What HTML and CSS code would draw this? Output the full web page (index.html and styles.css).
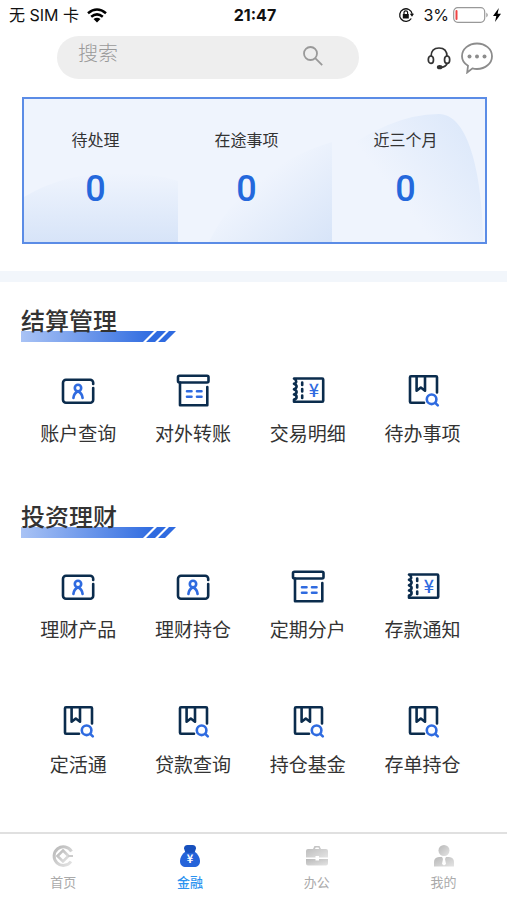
FILE: index.html
```html
<!DOCTYPE html>
<html lang="zh-CN">
<head>
  <meta charset="UTF-8" />
  <meta name="viewport" content="width=device-width, initial-scale=1" />
  <title>金融</title>
  <link rel="stylesheet" href="styles.css">
</head>
<body>

<!-- 图标 -->
<svg class="sprite" aria-hidden="true">
  <symbol id="icon-account" viewBox="0 0 36 36">
    <path class="dark" d="M33.200 11V9.800a3 3 0 0 0-3-3H6a3 3 0 0 0-3 3v17a3 3 0 0 0 3 3h24.200a3 3 0 0 0 3-3V15"/>
    <circle class="blue" cx="18" cy="15" r="3.200"/>
    <path class="blue" d="M13.400 25c.4-3.600 1.800-5.600 4.600-6.800 2.800 1.200 4.200 3.200 4.600 6.800"/>
  </symbol>
  <symbol id="icon-archive" viewBox="0 0 36 36">
    <rect class="dark" x="3" y="2.700" width="30.500" height="6.800" rx="1.500"/>
    <path class="dark" d="M5 9.500v22.800h27.300V14"/>
    <path class="blue" d="M12 18.200h4.500M22 18.200h4.500M12 23.800h4.500M22 23.800h4.500"/>
  </symbol>
  <symbol id="icon-ticket" viewBox="0 0 36 36">
    <path class="dark" d="M4 5.500h28.200q1 0 1 1v21.200q0 1-1 1H4v-2.200q2.600-.6 2.600-2.600T4 21.400q2.600-.8 2.600-2.400T4 16.200q2.600-.8 2.600-2.600T4 10.800q2.200-.6 2.200-2.400Q6.200 6.500 4 5.500z"/>
    <path class="dark" d="M12.200 9.500v2.500M12.200 16v2.500M12.200 22.500V25"/>
  </symbol>
  <symbol id="icon-book" viewBox="0 0 36 36">
    <path class="dark" d="M32 19.500V4.300q0-1-1-1H6q-1 0-1 1v24.400q0 1 1 1h13"/>
    <path class="dark" d="M11.600 3.500v14.200l4.200-3.200 4.200 3.200V3.500"/>
    <circle class="blue" cx="26.600" cy="26.300" r="4.800"/>
    <path class="blue" d="M30.200 29.800l2.600 2.600"/>
  </symbol>
  <symbol id="title-bar" viewBox="0 0 155 11">
    <path fill="url(#barFill)" d="M0 0h133l-11 11H0z"/>
    <path fill="#2f6be0" d="M136 0h9l-11 11h-9zM148 0h7l-11 11h-7z"/>
  </symbol>
  <defs>
    <linearGradient id="barFill">
      <stop offset="0" stop-color="#a9c3f5"/>
      <stop offset="1" stop-color="#2f6be0"/>
    </linearGradient>
    <linearGradient id="grayFill" x2="1" y2="1">
      <stop offset="0" stop-color="#b8b8b8"/>
      <stop offset="1" stop-color="#e4e4e4"/>
    </linearGradient>
  </defs>
</svg>

<!-- 状态栏 -->
<div class="status-bar">
  <div class="status-left">
    <span>无 SIM 卡</span>
    <svg width="20" height="15" viewBox="0 0 20 15" fill="none" stroke="#000" stroke-width="2.600">
      <path d="M1 5.200Q10-2.200 19 5.200M4.200 8.700q5.800-4.600 11.600 0"/>
      <path fill="#000" stroke="none" d="M6.500 11q3.500-2.700 7 0L10 14.500z"/>
    </svg>
  </div>
  <div class="status-time">21:47</div>
  <div class="status-right">
    <svg class="lock" width="16" height="16" viewBox="0 0 16 16" fill="none" stroke="#111">
      <path stroke-width="1.300" d="M13.300 11.500A6.300 6.300 0 1 1 14.200 7"/>
      <path fill="#111" stroke="none" d="M11.800 6.800h4.200l-2 3zM4.800 7h6v4.500h-6z"/>
      <path stroke-width="1.200" d="M6 7V5.600a1.800 1.800 0 0 1 3.600 0V7"/>
    </svg>
    <span>3%</span>
    <svg width="36" height="16" viewBox="0 0 36 16">
      <rect x=".7" y=".7" width="31" height="14.600" rx="4" fill="none" stroke="#999" stroke-width="1.200"/>
      <rect x="2.500" y="3" width="2" height="10" rx="1" fill="#ef4444"/>
      <path d="M33.300 5.500q3 2.500 0 5z" fill="#999"/>
    </svg>
    <svg width="8" height="14" viewBox="0 0 8 14"><path d="M5.800 0L0 8h3.300L2 14l6-8.300H4.600z"/></svg>
  </div>
</div>

<!-- 搜索 -->
<header class="header">
  <form class="search">
    <input type="text" name="keyword" placeholder="搜索" aria-label="搜索">
    <button type="submit" aria-label="搜索">
      <svg width="20" height="20" viewBox="0 0 20 20" fill="none" stroke="#999" stroke-width="1.800">
        <circle cx="7.500" cy="7.500" r="6.500"/>
        <path d="M12.200 12.200l7 7"/>
      </svg>
    </button>
  </form>
  <div class="header-actions">
    <button type="button" aria-label="客服">
      <svg width="24" height="24" viewBox="0 0 24 24" fill="none" stroke="#333" stroke-width="1.700">
        <path d="M4 10.500C4 5 7 2 12 2s8 3 8 8.500M20.300 17c-.8 2.500-3 4-6 4.300"/>
        <ellipse cx="3.900" cy="13.700" rx="2.600" ry="3.700"/>
        <ellipse cx="20.100" cy="13.700" rx="2.600" ry="3.700"/>
        <ellipse cx="12.700" cy="21.200" rx="2" ry="1.300" fill="#333"/>
      </svg>
    </button>
    <button type="button" aria-label="消息">
      <svg width="32" height="32" viewBox="0 0 32 32" fill="none" stroke="#8c8c8c" stroke-width="1.800">
        <path d="M7 23.800C3.300 21.500 1 18 1 14.200 1 7 7.700 1.500 16 1.500s15 5.500 15 12.700S24.300 27 16 27c-1.700 0-3.200-.2-4.600-.6L6.200 30.500z"/>
        <g fill="#8c8c8c" stroke="none"><circle cx="8.500" cy="14.500" r="2"/><circle cx="16" cy="14.500" r="2"/><circle cx="23.500" cy="14.500" r="2"/></g>
      </svg>
    </button>
  </div>
</header>

<main>
  <!-- 待办统计 -->
  <section class="summary">
    <svg class="summary-bg" viewBox="0 0 461 143" preserveAspectRatio="none" aria-hidden="true">
      <defs>
        <linearGradient id="wave1" x2="0" y2="1">
          <stop offset="0" stop-color="#eff4fd"/>
          <stop offset="1" stop-color="#d7e4f8"/>
        </linearGradient>
        <linearGradient id="wave2" x1=".4" y1=".4" x2="1" y2="1">
          <stop offset="0" stop-color="#eff4fd"/>
          <stop offset="1" stop-color="#d7e4f8"/>
        </linearGradient>
        <linearGradient id="wave3" x1="1" y1=".2" x2=".4" y2=".6">
          <stop offset="0" stop-color="#dce8fa"/>
          <stop offset="1" stop-color="#eff4fd"/>
        </linearGradient>
      </defs>
      <path fill="url(#wave1)" d="M0 98Q40 74 90 74q40 0 64 8v61H0z"/>
      <path fill="url(#wave2)" d="M185 143Q220 70 308 43v100z"/>
      <path fill="url(#wave3)" d="M308 60Q365 15 415 15c28 0 43 55 44 128H308z"/>
    </svg>
    <div class="summary-item">
      <span class="summary-label">待处理</span>
      <span class="summary-value">0</span>
    </div>
    <div class="summary-item">
      <span class="summary-label">在途事项</span>
      <span class="summary-value">0</span>
    </div>
    <div class="summary-item">
      <span class="summary-label">近三个月</span>
      <span class="summary-value">0</span>
    </div>
  </section>

  <div class="divider"></div>

  <section class="group">
    <h2 class="group-title"><svg><use href="#title-bar"/></svg><span>结算管理</span></h2>
    <div class="menu">
      <a class="menu-item" href="#"><svg><use href="#icon-account"/></svg>账户查询</a>
      <a class="menu-item" href="#"><svg><use href="#icon-archive"/></svg>对外转账</a>
      <a class="menu-item" href="#"><svg><use href="#icon-ticket"/><text class="yen" x="24" y="24">¥</text></svg>交易明细</a>
      <a class="menu-item" href="#"><svg><use href="#icon-book"/></svg>待办事项</a>
    </div>
  </section>

  <section class="group">
    <h2 class="group-title"><svg><use href="#title-bar"/></svg><span>投资理财</span></h2>
    <div class="menu">
      <a class="menu-item" href="#"><svg><use href="#icon-account"/></svg>理财产品</a>
      <a class="menu-item" href="#"><svg><use href="#icon-account"/></svg>理财持仓</a>
      <a class="menu-item" href="#"><svg><use href="#icon-archive"/></svg>定期分户</a>
      <a class="menu-item" href="#"><svg><use href="#icon-ticket"/><text class="yen" x="24" y="24">¥</text></svg>存款通知</a>
      <a class="menu-item" href="#"><svg><use href="#icon-book"/></svg>定活通</a>
      <a class="menu-item" href="#"><svg><use href="#icon-book"/></svg>贷款查询</a>
      <a class="menu-item" href="#"><svg><use href="#icon-book"/></svg>持仓基金</a>
      <a class="menu-item" href="#"><svg><use href="#icon-book"/></svg>存单持仓</a>
    </div>
  </section>
</main>

<!-- 底部导航 -->
<nav class="tab-bar">
  <a class="tab" href="#">
    <svg viewBox="0 0 24 24" fill="none" stroke="url(#grayFill)">
      <path stroke-width="3" d="M20.500 7.500A9.300 9.300 0 1 0 20 17.500"/>
      <path stroke-width="2.600" d="M12 6.500l5.500 5.500-5.500 5.500L6.500 12z"/>
      <path stroke="#ccc" stroke-width="2" d="M17 12h5"/>
    </svg>
    首页
  </a>
  <a class="tab active" href="#">
    <svg viewBox="0 0 24 24">
      <path fill="#2563d9" d="M7.500 7.500h9C20 10 22 13.500 22 17c0 4-2.500 6-6 6H8c-3.500 0-6-2-6-6 0-3.500 2-7 5.500-9.500z"/>
      <path fill="#1750bd" d="M6 4.500Q6 1 9.500 1h5Q18 1 18 4.500L16.800 8q-4.800 2.200-9.600 0z"/>
      <text class="bag-yen" x="12" y="19">¥</text>
    </svg>
    金融
  </a>
  <a class="tab" href="#">
    <svg viewBox="0 0 24 24" fill="url(#grayFill)">
      <path d="M3 5h5l1.500-3h5L16 5h5q2 0 2 2v6.500h-9V12h-3.500v1.500H1V7q0-2 2-2zm7 0h4.200l-.7-1.400h-2.800z"/>
      <path d="M1 15h9.500v1.500H14V15h9v4.500q0 2-2 2H3q-2 0-2-2z"/>
    </svg>
    办公
  </a>
  <a class="tab" href="#">
    <svg viewBox="0 0 24 24" fill="url(#grayFill)">
      <circle cx="12" cy="6.500" r="5.500"/>
      <path d="M2 22.500V18q0-4.500 5-5h3l1 2-1 5 2 1.500 2-1.500-1-5 1-2h3q5 .5 5 5v4.500z"/>
    </svg>
    我的
  </a>
</nav>

</body>
</html>
```
FILE: styles.css
```css
* {
  box-sizing: border-box;
}
body {
  font-family: "Noto Sans CJK SC", sans-serif;
  background: #fff;
  color: #333;
  margin: 0;
  min-height: 100vh;
  display: flex;
  flex-direction: column;
}
a {
  color: inherit;
  text-decoration: none;
}
button {
  background: none;
  border: none;
  padding: 0;
  cursor: pointer;
}
svg {
  display: block;
  flex: none;
}
.sprite {
  position: absolute;
  width: 0;
  height: 0;
}
.dark,
.blue {
  fill: none;
  stroke: #0b2c4d;
  stroke-width: 2.6;
  stroke-linecap: round;
  stroke-linejoin: round;
}
.blue {
  stroke: #2f6be0;
}
.yen {
  fill: #2f6be0;
  font: 500 18px "Noto Sans CJK SC", sans-serif;
  text-anchor: middle;
}

/* 状态栏 */
.status-bar {
  display: grid;
  grid-template-columns: 1fr auto 1fr;
  align-items: center;
  height: 30px;
  padding: 0 6px 0 9px;
  font-family: Inter, "Noto Sans CJK SC", sans-serif;
  font-size: 16px;
  line-height: 20px;
  color: #111;
}
.status-left,
.status-right {
  display: flex;
  align-items: center;
  gap: 8px;
}
.status-right {
  justify-content: flex-end;
  gap: 4px;
}
.lock {
  margin-right: 5px;
}
.status-time {
  font-weight: 700;
}

/* 搜索 */
.header {
  display: flex;
  align-items: center;
  justify-content: space-between;
  padding: 6px 14px 0 57px;
}
.search {
  display: flex;
  align-items: center;
  flex: 0 1 302px;
  height: 43px;
  padding: 0 36px 4px 21px;
  background: #eee;
  border-radius: 22px;
}
.search input {
  flex: 1;
  min-width: 0;
  padding: 0 0 6px;
  border: none;
  outline: none;
  background: none;
  font-family: inherit;
  font-size: 20px;
  font-weight: 300;
  line-height: 28px;
}
.search input::placeholder {
  color: #999;
}
.header-actions {
  display: flex;
  align-items: center;
  gap: 10px;
}

/* 统计卡片 */
.summary {
  position: relative;
  display: flex;
  justify-content: space-around;
  margin: 18px 20px 27px 22px;
  padding: 28px 0 27px;
  background: #eff4fd;
  border: 2px solid #5b8ce6;
}
.summary-bg {
  position: absolute;
  top: 0;
  left: 0;
  width: 100%;
  height: 100%;
}
.summary-item {
  position: relative;
  display: flex;
  flex-direction: column;
  align-items: center;
  gap: 12px;
}
.summary-label {
  font-size: 16px;
  line-height: 24px;
}
.summary-value {
  font-family: Roboto, sans-serif;
  font-size: 36px;
  font-weight: 500;
  line-height: 52px;
  color: #2468dc;
}
.divider {
  height: 11px;
  background: #f2f6fb;
}

/* 功能菜单 */
.group {
  padding: 24px 27px 33px 21px;
}
.group-title {
  position: relative;
  margin: 0 0 31px;
  height: 36px;
  font-size: 24px;
  font-weight: 500;
  line-height: 28px;
}
.group-title svg {
  position: absolute;
  left: 0;
  bottom: 0;
  width: 155px;
  height: 11px;
}
.group-title span {
  position: relative;
}
.menu {
  display: grid;
  grid-template-columns: repeat(4, 1fr);
  row-gap: 63px;
}
.menu-item {
  display: flex;
  flex-direction: column;
  align-items: center;
  gap: 12px;
  font-size: 19px;
  line-height: 24px;
}
.menu-item svg {
  width: 36px;
  height: 36px;
}

/* 底部导航 */
.tab-bar {
  position: sticky;
  bottom: 0;
  display: flex;
  margin-top: auto;
  padding: 10px 0 8px;
  background: #fff;
  border-top: 2px solid #e0e0e0;
}
.tab {
  flex: 1;
  display: flex;
  flex-direction: column;
  align-items: center;
  gap: 4px;
  font-size: 13px;
  line-height: 20px;
  color: #aaa;
}
.tab svg {
  width: 24px;
  height: 24px;
}
.tab.active {
  color: #2b93f0;
  font-weight: 500;
}
.bag-yen {
  fill: #fff;
  font: bold 11px "Noto Sans CJK SC", sans-serif;
  text-anchor: middle;
}
```
